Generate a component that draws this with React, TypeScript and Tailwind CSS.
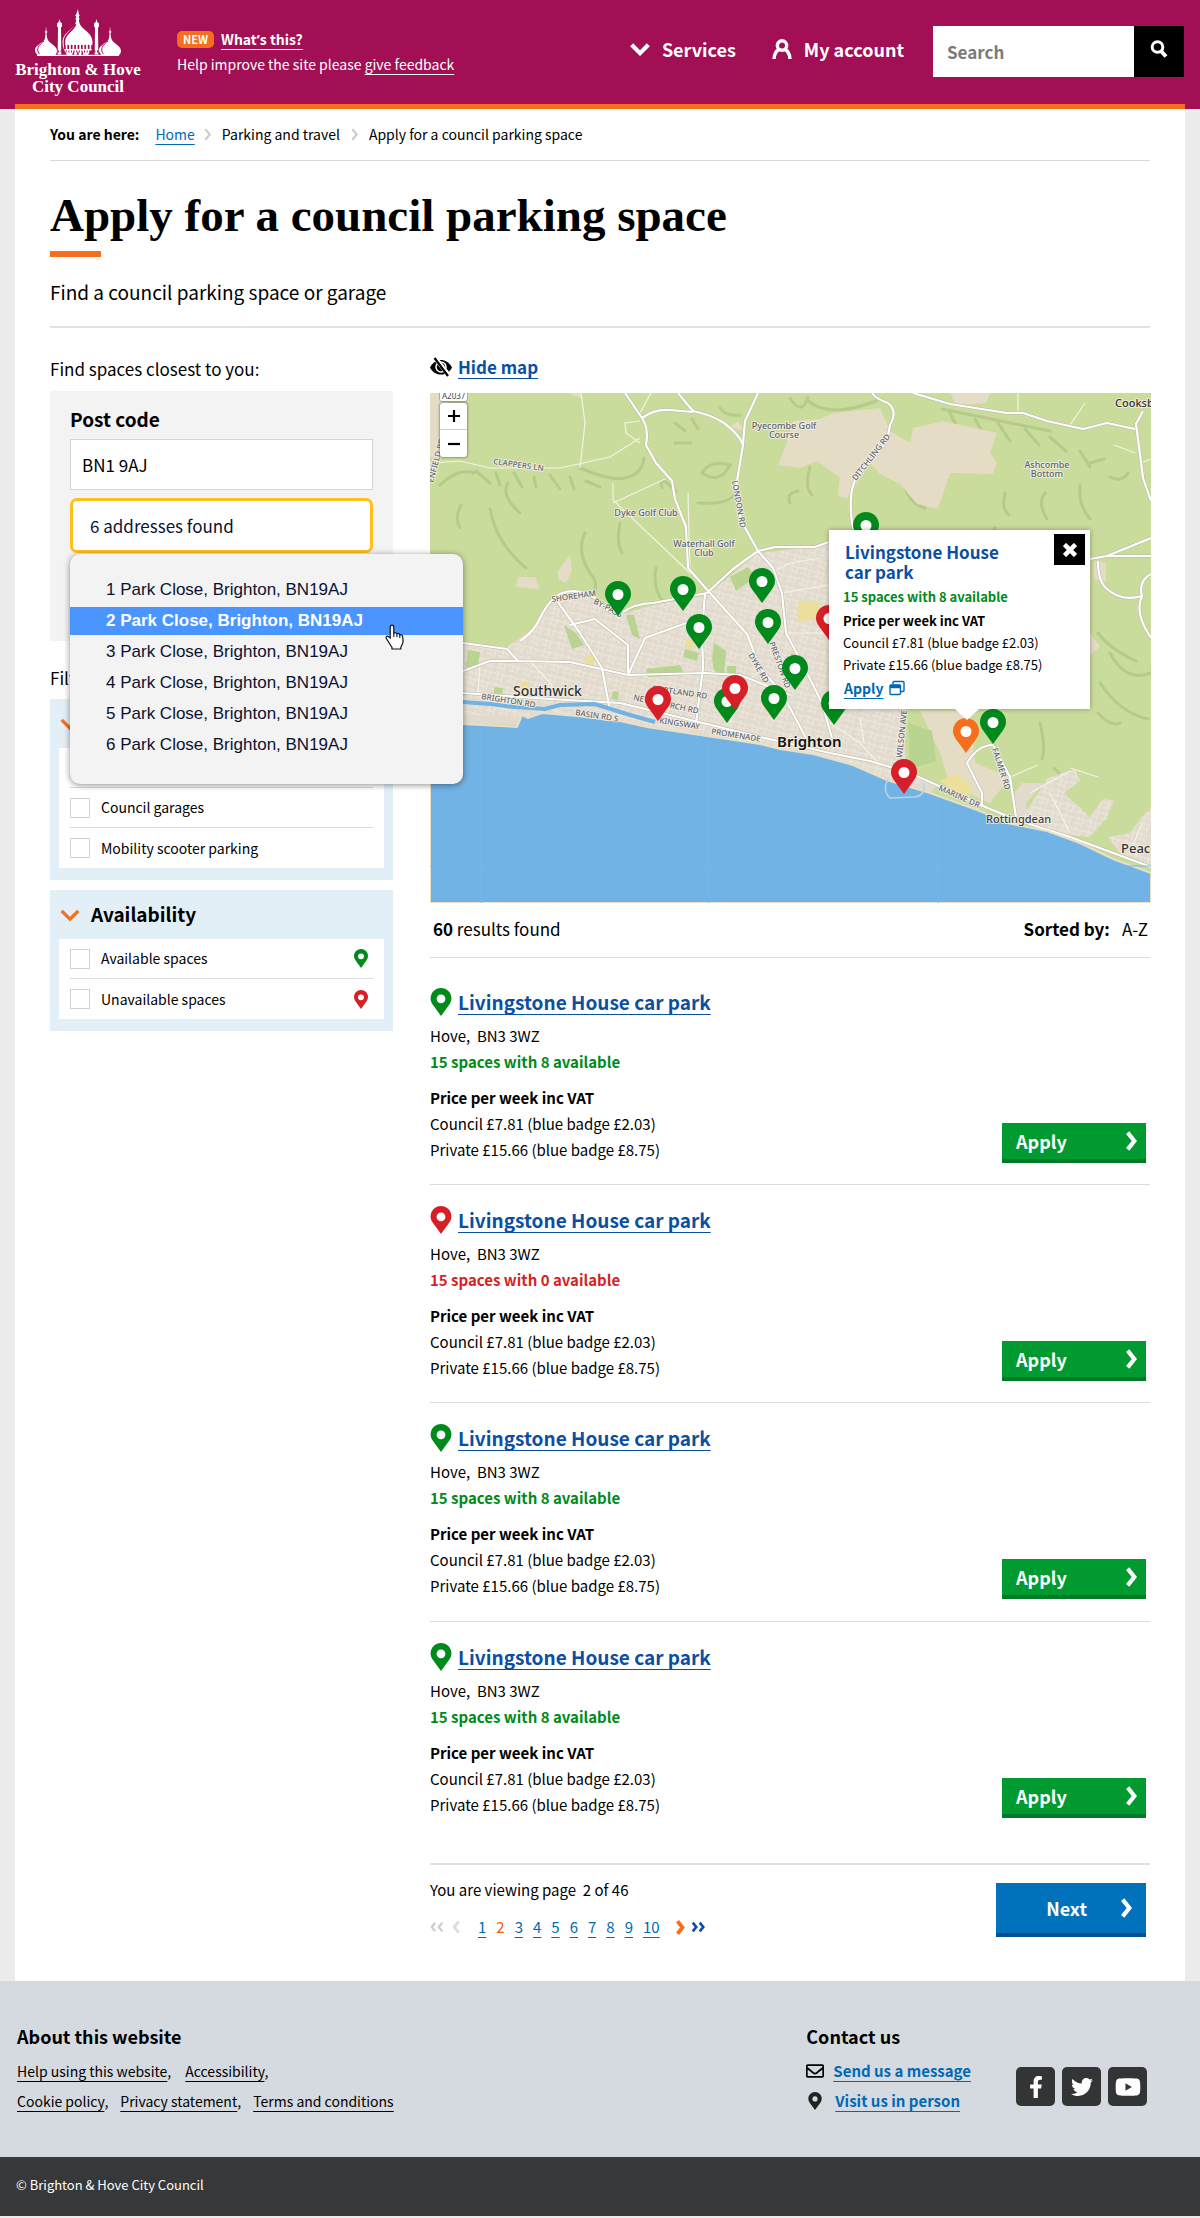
import type { ReactNode } from 'react'
import { FaFacebookF, FaRegEnvelope, FaTwitter, FaYoutube } from 'react-icons/fa'

const GREEN = '#008a1c'
const RED = '#d61f26'
const ORANGE = '#f56f1e'

const linkLine = 'underline decoration-1 underline-offset-4 [text-decoration-skip-ink:none]'

function Pin({ color, className }: { color: string; className: string }) {
  return (
    <svg viewBox="0 0 26 35" className={className} aria-hidden="true">
      <path d="M13 0C5.8 0 0 5.8 0 13c0 3 1.200 5.600 3 8.200L13 35l10-13.800c1.800-2.600 3-5.200 3-8.200C26 5.800 20.200 0 13 0z" fill={color} />
      <circle cx="13" cy="13.500" r="5.500" fill="#fff" />
    </svg>
  )
}

function Chevron({ dir, color, className, weight = 5 }: { dir: 'right' | 'left' | 'down'; color: string; className: string; weight?: number }) {
  const points = { right: '4,2 12,12 4,22', left: '12,2 4,12 12,22', down: '2,3 12,13 22,3' }[dir]
  return (
    <svg viewBox={dir === 'down' ? '0 0 24 16' : '0 0 16 24'} className={className} aria-hidden="true">
      <polyline points={points} fill="none" stroke={color} strokeWidth={weight} />
    </svg>
  )
}

function Logo() {
  return (
    <a href="#" className="block w-[126px] shrink-0 text-center font-['Liberation_Serif',serif] text-[17px] leading-[17px] font-bold whitespace-nowrap text-white">
      <svg viewBox="0 0 88 48" className="mx-auto h-12 w-[88px]" fill="#fff" aria-hidden="true">
        <path d="M44 0l.7 5 1 1.500-1 1.500.8 2-.7 1.500c.6 4 2.700 6.500 6.200 9.500 4.500 3.500 7.500 7 7.500 12.500 0 5-2 8.500-4.500 12.500H49.500l-1-4-1.500 4h-2l-1-4-1.500 4h-2l-1-4-1.500 4h-5c-2.500-4-4.500-7.500-4.500-12.500 0-5.500 3-9 7.500-12.500 3.500-3 5.600-5.500 6.200-9.500l-.7-1.500.8-2-1-1.500 1-1.500z" />
        <path d="M41.500 15c-1 5-8 8-10.500 14-1 2.800-.8 5-.5 7" fill="none" stroke="#a20f54" strokeWidth="1.600" />
        <path d="M30 38h28" stroke="#a20f54" strokeWidth="4.500" strokeDasharray="1.700 1.700" />
        <path d="M31 35.200h27M31 40.700h27" stroke="#fff" strokeWidth="1" />
        <path d="M25.500 10l.8 3 1.700 1.500v3l-1 1 .3 27h-3.600l.3-27-1-1v-3l1.700-1.500zM62.500 10l.8 3 1.700 1.500v3l-1 1 .3 27h-3.600l.3-27-1-1v-3l1.700-1.500z" />
        <path d="M12 17l.5 5 1 1-1 1 .6 5c.8 3 3 4.500 5.500 6.500 3 2.300 4.400 4 4.400 6.500 0 1.500-.8 3-1.800 4H3.500C2 44.500 1 43 1 41c0-2.500 1.700-4 4.500-6 3-2 5-3.500 5.600-6l.5-5-1-1 1-1z" />
        <path d="M76 17l.5 5 1 1-1 1 .6 5c.8 3 3 4.500 5.500 6.500 3 2.300 4.400 4 4.400 6.500 0 1.500-.8 3-1.800 4H67.500C66 44.500 65 43 65 41c0-2.500 1.700-4 4.500-6 3-2 5-3.500 5.600-6l.5-5-1-1 1-1z" />
        <path d="M9.800 32C7 35 3.500 37 3.700 41c.1 1.500.9 3 1.800 4M73.800 32c-2.800 3-6.300 5-6.100 9 .1 1.500.9 3 1.800 4" fill="none" stroke="#a20f54" strokeWidth="1" />
        <path d="M24 42.500h40" stroke="#a20f54" strokeWidth="2" strokeDasharray="1 1.600" />
        <path d="M3 46.300h82" stroke="#fff" strokeWidth="1.200" />
      </svg>
      <span className="mt-1 block">Brighton &amp; Hove</span>
      <span className="block">City Council</span>
    </a>
  )
}

function Header() {
  return (
    <header className="flex h-[109px] items-start bg-[#a20f54] pr-4 pl-[15px] text-white">
      <div className="pt-[9px]">
        <Logo />
      </div>
      <div className="ml-9 pt-[27px] text-[14px] leading-6 whitespace-nowrap">
        <p className="flex items-center">
          <span className="mr-[7px] rounded-[5px] bg-[#f56f1e] px-[6px] text-[11px] leading-[17px] font-bold">NEW</span>
          <a href="#" className={`text-[14px] font-bold ${linkLine}`}>What<span className="font-['Open_Sans',sans-serif]">’</span>s this?</a>
        </p>
        <p>
          Help improve the site please <a href="#" className={linkLine}>give feedback</a>
        </p>
      </div>
      <nav className="ml-auto flex gap-9 pt-[35px] text-[18px] leading-7 font-bold whitespace-nowrap">
        <a href="#" className="flex items-center">
          <Chevron dir="down" color="#fff" className="mr-3 h-[14px] w-5" />
          Services
        </a>
        <a href="#" className="flex items-center">
          <svg viewBox="0 0 20 20" className="mr-3 h-5 w-5" fill="none" stroke="#fff" strokeWidth="3.400" aria-hidden="true">
            <circle cx="10" cy="6.500" r="4.700" />
            <path d="M7.500 10C4 12 2.200 15 2 20M12.500 10c3.500 2 5.300 5 5.500 10" />
          </svg>
          My account
        </a>
      </nav>
      <form className="mt-[26px] ml-[29px] flex h-[51px]" role="search">
        <input type="search" aria-label="Search" placeholder="Search" className="w-[201px] bg-white px-3.5 text-[17px] font-bold text-black outline-none placeholder:text-[#7a7a7a]" />
        <button type="button" aria-label="Submit search" className="flex w-[50px] items-center justify-center bg-black pb-1.5">
          <svg viewBox="0 0 18 18" className="h-[18px] w-[18px]" fill="none" stroke="#fff" aria-hidden="true">
            <circle cx="7.500" cy="7" r="5.300" strokeWidth="3" />
            <path d="M11 11l5 5.500" strokeWidth="4" />
          </svg>
        </button>
      </form>
    </header>
  )
}

function Breadcrumb() {
  return (
    <nav aria-label="Breadcrumb" className="flex h-[52px] items-center border-b border-[#d9d9d9] text-[14px]">
      <span className="mr-4 font-bold">You are here:</span>
      <a href="#" className={`text-[#0069b4] ${linkLine}`}>Home</a>
      <Chevron dir="right" color="#ccc" weight={4} className="mr-2.5 ml-2 h-[13px] w-[9px]" />
      <span>Parking and travel</span>
      <Chevron dir="right" color="#ccc" weight={4} className="mx-2.5 h-[13px] w-[9px]" />
      <span>Apply for a council parking space</span>
    </nav>
  )
}

const addresses = [1, 2, 3, 4, 5, 6].map((n) => `${n} Park Close, Brighton, BN19AJ`)

function AddressMenu() {
  return (
    <div className="absolute top-[163px] left-5 z-20 w-[393px] rounded-[10px] bg-[#f3f3f3] pt-[22px] pb-[25px] shadow-[0_1px_6px_rgba(0,0,0,0.45)]">
      <ul role="listbox" aria-label="Addresses" className="flex flex-col gap-[3px] font-['Liberation_Sans',sans-serif] text-[17px] leading-7 text-[#0b1230]">
        {addresses.map((a, i) => (
          <li
            key={a}
            role="option"
            aria-selected={i === 1}
            className={i === 1 ? 'bg-[#4a95ff] pl-9 font-bold text-white' : 'pl-9'}
          >
            {a}
          </li>
        ))}
      </ul>
      <svg viewBox="0 0 20 26" className="absolute top-[70px] left-[315px] h-[26px] w-5" aria-hidden="true">
        <path d="M7 1.200c1.300 0 1.800.8 1.800 2V9c.8-.6 2.500-.4 3 .8 1-.7 2.500-.2 2.900 1 1.300-.4 2.800.4 3 2 .2 2.600.9 4.500-.2 7l-1.700 3.500V25H7v-1.700C5 20.500 3.500 18 1.400 14.500.5 12.800 2 11.500 3.500 12.500L5.200 14V3.200c0-1.200.6-2 1.800-2z" fill="#fff" stroke="#111" strokeWidth="1.200" />
        <path d="M8.800 9v4M11.900 10v3.200M14.800 11v3" stroke="#111" strokeWidth="1.100" />
      </svg>
    </div>
  )
}

function FilterPanel({ title, children }: { title: string; children: ReactNode }) {
  return (
    <section className="bg-[#e3eff7] px-[9px] pb-3">
      <h2 className="text-[19px] font-bold">
        <button type="button" className="flex h-[49px] w-full items-center pl-px">
          <Chevron dir="down" color={ORANGE} weight={4} className="mr-[11px] h-[14px] w-5" />
          {title}
        </button>
      </h2>
      <div className="divide-y divide-[#dcdcdc] border-x-[11px] border-white bg-white">{children}</div>
    </section>
  )
}

function CheckRow({ label, pin }: { label: string; pin?: string }) {
  return (
    <label className="flex h-10 items-center text-[14px]">
      <input type="checkbox" className="mr-[11px] h-5 w-5 shrink-0 appearance-none border border-[#d2d2d2] bg-white" />
      {label}
      {pin && <Pin color={pin} className="mr-[5px] ml-auto h-[19px] w-[14px]" />}
    </label>
  )
}

function Sidebar() {
  return (
    <aside className="w-[343px] shrink-0 pt-7">
      <p className="text-[17px] leading-[26px]">Find spaces closest to you:</p>
      <div className="relative mt-[9px] h-[250px] bg-[#f3f3f3] px-5 pt-3.5">
        <label htmlFor="postcode" className="block text-[19px] leading-7 font-bold">Post code</label>
        <input id="postcode" defaultValue="BN1 9AJ" className="mt-1.5 block h-[51px] w-full border border-[#d5d5d5] bg-white px-[11px] text-[17px] outline-none" />
        <select aria-label="Address" className="mt-2 block h-[55px] w-full appearance-none rounded-[7px] border-[3px] border-[#fdc01f] bg-white px-[17px] text-[17px] text-[#0b1230] outline-none">
          <option>6 addresses found</option>
        </select>
        <AddressMenu />
      </div>
      <p className="mt-6 text-[17px] leading-[26px]">Filter by:</p>
      <div className="mt-2 flex flex-col gap-[10px]">
        <FilterPanel title="Type">
          <CheckRow label="Car parks" />
          <CheckRow label="Council garages" />
          <CheckRow label="Mobility scooter parking" />
        </FilterPanel>
        <FilterPanel title="Availability">
          <CheckRow label="Available spaces" pin={GREEN} />
          <CheckRow label="Unavailable spaces" pin={RED} />
        </FilterPanel>
      </div>
    </aside>
  )
}

const mainRoads = [
  'M248 0L263 18Q282 22 294 30Q310 42 313 52L307 88Q303 108 313 131L328 158L343 175L352 200L356 240L372 270L392 310L402 345',
  'M195 0L212 25Q219 35 216 52L226 70L242 88L245 106L256 134L258 175L280 200L317 241L330 275L352 300L376 345',
  'M212 25Q224 16 240 17L263 19M328 0L315 28L313 51',
  'M442 0Q446 6 458 10Q468 18 460 32L457 48L426 85Q418 100 422 130L430 160',
  'M90 248Q105 238 110 225Q120 205 132 200Q150 194 168 207Q178 222 190 221Q205 210 223 210L277 200L303 176L328 158L345 154L385 154L410 145L500 165L660 166L677 163L721 163',
  'M483 0L520 11L577 20L593 20L617 28L653 36L677 30L705 36M713 18L706 31L710 61L713 85L721 108',
  'M668 168Q668 188 676 195Q690 209 712 203Q708 188 721 181M677 163L721 145M712 203Q704 220 721 245',
  'M33 250L77 256L88 268L140 269L198 282L275 280L310 282L360 302',
  'M33 278L60 268L88 268M33 300L120 306L190 310L240 322L330 344L400 360L440 368L480 380L520 398L560 416L590 428L640 444L721 474',
  'M275 200L272 240L273 275L266 330M198 282L215 245L270 225',
  'M563 352L580 384L586 424M563 352Q548 352 537 370L552 400L552 414',
  'M125 205L150 240L172 275L180 318M140 232L165 226L198 252L198 280',
]

const minorRoads = [
  'M0 70L30 68L60 75L130 75L180 64L210 45M150 75L155 30L151 0M221 0L210 20M210 28L195 30L196 40L210 50M183 90V107L260 180L258 100',
  'M183 110L235 86M655 10L640 32M588 0V20M684 52L705 60M710 70L721 66',
  'M100 268L122 292L122 310M50 270L48 300M340 180L360 170L390 165M350 200L400 192M355 240L400 240M330 275L310 300L300 330',
  'M400 330L430 350L450 372M430 325L434 350M600 400L640 378M620 400L640 440M640 375L668 384M580 384L608 372M700 460L712 430',
]

const hills = [
  'M30 135Q24 125 31 112M60 116Q66 150 96 175M78 90Q70 102 90 120M155 140Q146 158 160 180Q170 190 162 204M190 130Q186 150 192 160M226 175Q222 195 234 210',
  'M150 75Q180 88 195 85Q212 82 214 65M232 95Q228 80 246 98M268 110Q300 112 305 100M272 80Q290 92 300 72Q280 66 272 80M290 15Q296 24 310 22M360 5Q372 24 378 4',
  'M10 92Q28 75 44 80M46 78l14 12M66 80l4 12M84 80l8 14M104 84l2 10M120 82l10 14M140 84l4 12M156 88l14 6M245 30l10 8M262 26l6 10M245 50l16 0',
  'M378 8Q400 26 446 8M512 16L620 38M520 20l6 12M545 26l8 14M568 30l12 18M595 36l14 16M620 44l16 14M650 58l10 16M660 70l14-4M680 84q12 6 18-4',
  'M575 100q-4 16 4 22M615 100q-8 10 2 26M650 92q-2 20 10 34M380 74q-6 20 2 28M475 95q6 16 20 20M565 135l-6 10M360 110Q356 100 368 98',
  'M668 240Q680 256 706 268M680 260Q696 290 721 280M670 290Q690 320 718 326M610 330Q616 355 612 366M668 320Q680 334 690 330M624 375Q640 390 632 400',
]

type Label = { text: string; x: number; y: number; size?: number; rotate?: number; color?: string; weight?: number; anchor?: 'start' | 'middle' }

const labels: Label[] = [
  { text: 'Pyecombe Golf', x: 354, y: 36, anchor: 'middle' },
  { text: 'Course', x: 354, y: 45, anchor: 'middle' },
  { text: 'Dyke Golf Club', x: 216, y: 123, anchor: 'middle' },
  { text: 'Waterhall Golf', x: 274, y: 154, anchor: 'middle' },
  { text: 'Club', x: 274, y: 163, anchor: 'middle' },
  { text: 'Ashcombe', x: 617, y: 75, anchor: 'middle' },
  { text: 'Bottom', x: 617, y: 84, anchor: 'middle' },
  { text: 'Cooksbridge', x: 685, y: 14, size: 11, color: '#333' },
  { text: 'Southwick', x: 83, y: 303, size: 14, color: '#333' },
  { text: 'Brighton', x: 347, y: 354, size: 15, color: '#111', weight: 600 },
  { text: 'Rottingdean', x: 556, y: 430, size: 11, color: '#444' },
  { text: 'Peacehaven', x: 691, y: 460, size: 13, color: '#333' },
  { text: 'CLAPPERS LN', x: 63, y: 71, size: 8, rotate: 8 },
  { text: 'ENFIELD RD', x: 3, y: 90, size: 8, rotate: -75 },
  { text: 'LONDON RD', x: 302, y: 88, size: 8, rotate: 80 },
  { text: 'DITCHLING RD', x: 426, y: 88, size: 8, rotate: -52 },
  { text: 'SHOREHAM', x: 122, y: 209, size: 8, rotate: -8 },
  { text: 'BY-PASS', x: 163, y: 210, size: 8, rotate: 28 },
  { text: 'BRIGHTON RD', x: 51, y: 306, size: 8, rotate: 9 },
  { text: 'BASIN RD S', x: 145, y: 322, size: 8, rotate: 9 },
  { text: 'KINGSWAY', x: 229, y: 330, size: 8, rotate: 9 },
  { text: 'PROMENADE', x: 281, y: 341, size: 8, rotate: 9 },
  { text: 'NEW CHURCH RD', x: 203, y: 307, size: 8, rotate: 12 },
  { text: 'PORTLAND RD', x: 222, y: 298, size: 8, rotate: 8 },
  { text: 'DYKE RD', x: 318, y: 262, size: 8, rotate: 60 },
  { text: 'PRESTON RD', x: 339, y: 250, size: 8, rotate: 70 },
  { text: 'WILSON AVE', x: 472, y: 365, size: 8, rotate: -84 },
  { text: 'FALMER RD', x: 562, y: 356, size: 8, rotate: 72 },
  { text: 'MARINE DR', x: 508, y: 397, size: 8, rotate: 24 },
]

function MapDrawing() {
  return (
    <svg viewBox="0 0 721 510" preserveAspectRatio="xMidYMid slice" className="block h-full w-full" role="img" aria-label="Map of Brighton and Hove">
      <defs>
        <pattern id="streets" width="13" height="11" patternUnits="userSpaceOnUse" patternTransform="rotate(14)">
          <path d="M0 3h13M0 8h8M4 0v8M9 3v8" stroke="#efeae1" strokeWidth="0.900" fill="none" />
        </pattern>
      </defs>
      <rect width="721" height="510" fill="#c9dc9b" />
      <g fill="none" stroke="#b0c487" strokeWidth="3" strokeLinecap="round" opacity="0.750">
        {hills.map((d) => <path key={d} d={d} />)}
      </g>
      <g fill="#e5dcc5">
        <path d="M363 28L390 26L403 20L450 15L460 38L480 50L483 35L513 28L567 40L560 60L567 70L563 81L520 80L508 116L487 111L470 91L450 81L440 70L417 105L408 103L410 85L387 68L370 75L348 72L356 52z" />
        <path d="M128 178L140 162L142 178L136 190L128 186zM88 184L105 184L110 196L86 194zM100 242L112 222L130 232L122 262L95 256zM138 0h12l4 6zM300 34l8-6 6 10zM520 0h40l-4 10-30 2z" />
        <path d="M490 318L540 318L545 370L580 384L560 410L520 392L510 360zM664 168l12 2v18l-12-2zM660 240l10 14-10 8z" />
        <path d="M0 0h18v64H0z" />
      </g>
      <path d="M0 250L33 250L77 254L108 232L123 205L150 200L190 222L223 212L277 202L328 160L350 158L400 150L500 200L474 320L476 376L508 392L500 400L457 388L380 362L217 335L147 325L87 332L0 330z" fill="#e2dacd" />
      <path d="M33 250L77 254L108 232L123 205L150 200L190 222L223 212L277 202L328 160L350 158L400 150L500 200L474 320L476 376L508 392L457 388L380 362L217 335L147 325L33 322z" fill="url(#streets)" />
      <g fill="#b9d490">
        <path d="M38 257l12 2-2 16-12-1zM64 294l9 1-1 8-8-1zM134 232l12 8 8 12-12 4zM255 256l14 4-2 8-14-4zM284 250l12 8-2 24-10-4-2-12zM196 222l6 20 8 4-6-24zM300 184l18-10 8 10-20 14zM361 260l12 4-2 12-10-4zM297 273h9v8h-9zM183 298l6 1-1 8-7-1zM216 276l34-4 4 10-36 2zM478 330l24 8 4 30-26 8z" />
      </g>
      <g fill="#ecdf9b">
        <path d="M368 208h22l-2 18-20 2zM91 288l8 1-2 8-8-1zM156 262l9 2-2 8-8-2zM256 246l8 2-1 8-8-2zM510 388l16-8 16 14-4 14z" />
      </g>
      <path d="M590 428L608 400L618 385L645 376L650 388L634 400L660 424L674 405L684 408L676 426L660 444L640 442zM583 402L592 390L614 390L596 410L598 424L588 426zM678 444L700 440L712 424L721 415V472L690 460z" fill="#e2dacd" />
      <path d="M590 428L608 400L618 385L645 376L650 388L634 400L660 424L674 405L684 408L676 426L660 444L640 442zM678 444L700 440L712 424L721 415V472L690 460z" fill="url(#streets)" />
      <g fill="none" stroke="#f4f2e6" strokeWidth="1.200">
        {minorRoads.map((d) => <path key={d} d={d} />)}
      </g>
      <g fill="none" stroke="#b9b7a8" strokeWidth="3.200" strokeLinejoin="round">
        {mainRoads.map((d) => <path key={d} d={d} />)}
      </g>
      <g fill="none" stroke="#fff" strokeWidth="2.200" strokeLinejoin="round">
        {mainRoads.map((d) => <path key={d} d={d} />)}
      </g>
      <path d="M0 327L33 331L87 334L92 322L98 325L112 320L147 323L190 328L217 334L257 340L330 351L350 356L383 361L423 372L457 387L500 400L550 418L577 430L617 438L650 450L683 466L721 480V510H0z" fill="#71b3e4" stroke="#e8dfc4" strokeWidth="2" />
      <path d="M33 309L60 311L85 314L115 316L130 312L165 311L200 322L225 329" fill="none" stroke="#71b3e4" strokeWidth="4" />
      <path d="M458 386Q452 398 460 405L485 404Q496 402 494 390" fill="none" stroke="#b9d3e0" strokeWidth="1.500" />
      <path d="M51 335V510M279 345V510M508 405V510M0 473H721" stroke="#78b7e6" strokeWidth="1" />
      <g fontFamily='"Noto Sans", sans-serif' stroke="#f5f1e8" strokeWidth="2" strokeOpacity="0.800" paintOrder="stroke" strokeLinejoin="round">
        {labels.map((l) => (
          <text
            key={l.text}
            x={l.x}
            y={l.y}
            fontSize={l.size ?? 9}
            fontWeight={l.weight ?? 500}
            fill={l.color ?? '#62656f'}
            textAnchor={l.anchor ?? 'start'}
            transform={l.rotate ? `rotate(${l.rotate} ${l.x} ${l.y})` : undefined}
          >
            {l.text}
          </text>
        ))}
      </g>
    </svg>
  )
}

const pins: { x: number; y: number; color: string }[] = [
  { x: 436, y: 154, color: GREEN },
  { x: 332, y: 210, color: GREEN },
  { x: 253, y: 218, color: GREEN },
  { x: 188, y: 223, color: GREEN },
  { x: 399, y: 247, color: RED },
  { x: 338, y: 251, color: GREEN },
  { x: 269, y: 256, color: GREEN },
  { x: 365, y: 297, color: GREEN },
  { x: 344, y: 327, color: GREEN },
  { x: 297, y: 330, color: GREEN },
  { x: 305, y: 317, color: RED },
  { x: 228, y: 328, color: RED },
  { x: 404, y: 332, color: GREEN },
  { x: 563, y: 351, color: GREEN },
  { x: 536, y: 360, color: ORANGE },
  { x: 474, y: 401, color: RED },
]

function MapPopup() {
  return (
    <div className="absolute top-[137px] left-[399px] w-[261px] bg-white pt-3 pr-4 pb-[9px] pl-3.5 text-[13px] leading-[22px] shadow-[0_0_5px_rgba(0,0,0,0.35)]">
      <h3 className="w-[180px] pl-0.5 text-[17px] leading-5 font-bold text-[#0a4fa3]">Livingstone House car park</h3>
      <p className="mt-1 font-bold text-[#008a1c]">15 spaces with 8 available</p>
      <p className="mt-0.5 font-bold">Price per week inc VAT</p>
      <p>Council £7.81 (blue badge £2.03)</p>
      <p>Private £15.66 (blue badge £8.75)</p>
      <p className="flex items-center gap-1.5 pl-px">
        <a href="#" className={`text-[14px] leading-6 font-bold text-[#0069b4] ${linkLine}`}>Apply</a>
        <svg viewBox="0 0 16 16" className="h-4 w-4" fill="none" stroke="#0069b4" aria-hidden="true">
          <rect x="1" y="5" width="10.500" height="9.500" rx="1" strokeWidth="1.400" />
          <path d="M1 6.500h10.500" strokeWidth="3.500" />
          <path d="M4 4V2.500a1 1 0 0 1 1-1h9a1 1 0 0 1 1 1v8a1 1 0 0 1-1 1h-2" strokeWidth="1.400" />
        </svg>
      </p>
      <button type="button" aria-label="Close" className="absolute top-1 right-[5px] flex h-[31px] w-[31px] items-center justify-center bg-black">
        <svg viewBox="0 0 14 14" className="h-3.5 w-3.5" stroke="#fff" strokeWidth="4.500" aria-hidden="true">
          <path d="M1.500 1.500l11 11M12.500 1.500l-11 11" />
        </svg>
      </button>
      <svg viewBox="0 0 24 11" className="absolute top-full left-[126px] h-[11px] w-6" fill="#fff" aria-hidden="true">
        <path d="M0 0h24L12 11z" />
      </svg>
    </div>
  )
}

function MapView() {
  return (
    <div className="relative mt-[13px] -mr-px h-[510px] overflow-hidden">
      <MapDrawing />
      <div className="absolute -top-1 left-[9px] rounded-[3px] border border-[#aaa] bg-white px-0.5 text-center font-['Noto_Sans',sans-serif] text-[8px] leading-[11px] text-[#444]">A2037</div>
      {pins.map((p) => (
        <button key={`${p.x}-${p.y}`} type="button" aria-label="Car park" className="absolute h-[35px] w-[26px]" style={{ left: p.x - 13, top: p.y - 35 }}>
          <Pin color={p.color} className="h-full w-full" />
        </button>
      ))}
      <div className="absolute top-[10px] left-[10px] flex w-[27px] flex-col divide-y divide-[#ccc] rounded-[3px] bg-white shadow-[0_0_2px_1px_rgba(0,0,0,0.3)]">
        <button type="button" aria-label="Zoom in" className="flex h-[27px] items-center justify-center">
          <svg viewBox="0 0 12 12" className="h-3 w-3" stroke="#000" strokeWidth="2.200" aria-hidden="true"><path d="M0 6h12M6 0v12" /></svg>
        </button>
        <button type="button" aria-label="Zoom out" className="flex h-[27px] items-center justify-center">
          <svg viewBox="0 0 12 12" className="h-3 w-3" stroke="#000" strokeWidth="2.200" aria-hidden="true"><path d="M0 6h12" /></svg>
        </button>
      </div>
      <MapPopup />
    </div>
  )
}

function ResultCard({ available, className }: { available: number; className: string }) {
  const color = available > 0 ? GREEN : RED
  return (
    <li className={`flex items-end justify-between border-[#dcdcdc] ${className}`}>
      <div className="text-[15px] leading-[26px]">
        <h2 className="flex h-7 items-start gap-1.5 text-[19px] leading-7 font-bold">
          <Pin color={color} className="h-7 w-[22px]" />
          <a href="#" className={`text-[#0a4fa3] ${linkLine}`}>Livingstone House car park</a>
        </h2>
        <p className="mt-[7px]">Hove,&nbsp; BN3 3WZ</p>
        <p className={available > 0 ? 'font-bold text-[#008a1c]' : 'font-bold text-[#d61f26]'}>15 spaces with {available} available</p>
        <p className="mt-2.5 font-bold">Price per week inc VAT</p>
        <p>Council £7.81 (blue badge £2.03)</p>
        <p>Private £15.66 (blue badge £8.75)</p>
      </div>
      <button type="button" className="mr-1 flex h-10 w-36 items-center justify-between border-b-4 border-[#007a26] bg-[#009a31] pr-2 pl-3.5 text-[18px] font-bold text-white">
        Apply
        <Chevron dir="right" color="#fff" className="h-5 w-3.5" />
      </button>
    </li>
  )
}

function Pagination() {
  return (
    <div className="flex items-start justify-between border-t-2 border-[#e0e0e0]">
      <div className="pt-[13px] text-[15px]">
        <p className="leading-6">You are viewing page&nbsp; 2 of 46</p>
        <nav aria-label="Pages" className="mt-[13px] flex items-center leading-6 text-[#0069b4]">
          <a href="#" aria-label="First page" className="flex">
            <Chevron dir="left" color="#ccc" className="h-3 w-[7px]" />
            <Chevron dir="left" color="#ccc" className="h-3 w-[7px]" />
          </a>
          <a href="#" aria-label="Previous page" className="mr-[17px] ml-2">
            <Chevron dir="left" color="#ddd" className="h-3.5 w-[9px]" />
          </a>
          <div className="flex gap-2.5">
            {[1, 2, 3, 4, 5, 6, 7, 8, 9, 10].map((n) =>
              n === 2 ? (
                <span key={n} aria-current="page" className="text-[#f05a1a]">2</span>
              ) : (
                <a key={n} href="#" className={linkLine}>{n}</a>
              ),
            )}
          </div>
          <a href="#" aria-label="Next page" className="mr-1.5 ml-[15px]">
            <Chevron dir="right" color={ORANGE} weight={6} className="h-[15px] w-2.5" />
          </a>
          <a href="#" aria-label="Last page" className="flex">
            <Chevron dir="right" color="#0a4fa3" weight={6} className="h-3 w-[7px]" />
            <Chevron dir="right" color="#0a4fa3" weight={6} className="h-3 w-[7px]" />
          </a>
        </nav>
      </div>
      <button type="button" className="mt-[18px] mr-1 flex h-[54px] w-[150px] items-center justify-end border-b-4 border-[#00508f] bg-[#0072bc] pr-[13px] text-[18px] font-bold text-white">
        Next
        <Chevron dir="right" color="#fff" className="ml-8 h-5 w-3.5" />
      </button>
    </div>
  )
}

function Results() {
  return (
    <section className="min-w-0 flex-1 pt-[26px]">
      <button type="button" className="flex items-center text-[17px] leading-[26px] font-bold text-[#0a4fa3]">
        <svg viewBox="0 0 22 20" className="mr-1.5 h-5 w-[22px]" aria-hidden="true">
          <path d="M0 10.500C3 5 7 3 11 3s8 2 11 7.500C19 16 15 17.500 11 17.500S3 16 0 10.500z" fill="#000" />
          <circle cx="11" cy="10" r="5" fill="none" stroke="#fff" strokeWidth="1.500" />
          <path d="M9.500 8.500a2.500 2.500 0 0 1 3.500 0" fill="none" stroke="#fff" strokeWidth="1.200" />
          <path d="M4.500 0L19 18.500" stroke="#fff" strokeWidth="4.500" />
          <path d="M4.500 1L18 19" stroke="#000" strokeWidth="2.200" />
        </svg>
        <span className={linkLine}>Hide map</span>
      </button>
      <MapView />
      <div className="flex justify-between border-b border-[#dcdcdc] pt-[13px] pr-0.5 pb-[15px] pl-[3px] text-[17px] leading-[26px]">
        <p><strong>60</strong> results found</p>
        <p className="flex gap-3"><strong>Sorted by:</strong><span>A-Z</span></p>
      </div>
      <ul>
        <ResultCard available={8} className="border-b pt-[30px] pb-[21px]" />
        <ResultCard available={0} className="border-b pt-[21px] pb-[21px]" />
        <ResultCard available={8} className="border-b pt-[21px] pb-[22px]" />
        <ResultCard available={8} className="pt-[21px] pb-[45px]" />
      </ul>
      <Pagination />
    </section>
  )
}

function Footer() {
  const social = 'flex h-[39px] w-[39px] items-center justify-center rounded-[5px] bg-[#333436] text-white'
  return (
    <footer>
      <div className="flex min-h-44 items-start bg-[#d5dae1] pt-[42px] pr-[53px] pl-[17px]">
        <div className="text-[14px] leading-[30px]">
          <h2 className="mb-[7px] text-[18px] leading-[26px] font-bold">About this website</h2>
          <p className="flex gap-3.5">
            <span><a href="#" className={linkLine}>Help using this website</a>,</span>
            <span><a href="#" className={linkLine}>Accessibility</a>,</span>
          </p>
          <p className="flex gap-3">
            <span><a href="#" className={linkLine}>Cookie policy</a>,</span>
            <span><a href="#" className={linkLine}>Privacy statement</a>,</span>
            <a href="#" className={linkLine}>Terms and conditions</a>
          </p>
        </div>
        <div className="mr-[45px] ml-auto text-[15px] leading-[30px] font-bold">
          <h2 className="mb-[7px] text-[18px] leading-[26px]">Contact us</h2>
          <p className="flex items-center">
            <FaRegEnvelope className="mr-[9px] h-[18px] w-[18px] text-black" aria-hidden="true" />
            <a href="#" className={`text-[#0069b4] ${linkLine}`}>Send us a message</a>
          </p>
          <p className="flex items-center">
            <svg viewBox="0 0 26 35" className="mr-[13px] ml-0.5 h-[18px] w-3.5" aria-hidden="true">
              <path d="M13 0C5.800 0 0 5.800 0 13c0 3 1.200 5.600 3 8.200L13 35l10-13.800c1.800-2.600 3-5.200 3-8.200C26 5.800 20.200 0 13 0z" fill="#222" />
              <circle cx="13" cy="13.500" r="5" fill="#d5dae1" />
            </svg>
            <a href="#" className={`text-[#0069b4] ${linkLine}`}>Visit us in person</a>
          </p>
        </div>
        <div className="flex gap-[7px] pt-11">
          <a href="#" aria-label="Facebook" className={social}><FaFacebookF className="h-[22px] w-[22px]" /></a>
          <a href="#" aria-label="Twitter" className={social}><FaTwitter className="h-[22px] w-[22px]" /></a>
          <a href="#" aria-label="YouTube" className={social}><FaYoutube className="h-[26px] w-[26px]" /></a>
        </div>
      </div>
      <div className="flex h-[59px] items-center bg-[#373839] px-4 pb-1 text-[13px] text-white">© Brighton &amp; Hove City Council</div>
    </footer>
  )
}

export default function App() {
  return (
    <div className="bg-[#ececec] pb-1 font-['Noto_Sans_CJK_SC',sans-serif] text-black">
      <Header />
      <main className="relative mx-[15px] -mt-[5px] border-t-[5px] border-[#f56f1e] bg-white px-[35px] pb-[42px]">
        <Breadcrumb />
        <h1 className="mt-[26px] font-['Liberation_Serif',serif] text-[47px] leading-[56px] font-bold">Apply for a council parking space</h1>
        <div className="mt-2 h-1.5 w-[51px] bg-[#f56f1e]" />
        <p className="mt-[21px] border-b-2 border-[#e2e2e2] pb-5 text-[19px] leading-7">Find a council parking space or garage</p>
        <div className="flex gap-[37px]">
          <Sidebar />
          <Results />
        </div>
      </main>
      <Footer />
    </div>
  )
}
